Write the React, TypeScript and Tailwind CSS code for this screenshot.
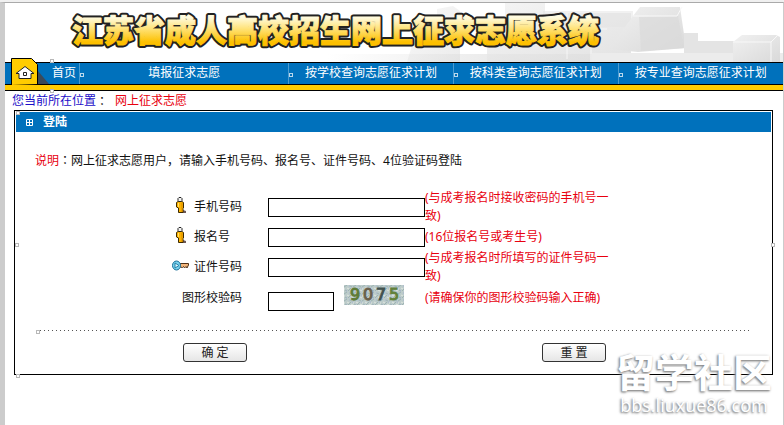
import React from 'react';
import clsx from 'clsx';

const navItems = ['填报征求志愿', '按学校查询志愿征求计划', '按科类查询志愿征求计划', '按专业查询志愿征求计划'];

const Handle = ({ className }: { className: string }) => (
  <span className={clsx('absolute h-1 w-1 border border-[#b8b8b8] bg-white', className)} />
);

const Banner = () => (
  <header className="relative h-[59px] overflow-hidden">
    <svg className="absolute top-0 right-0" width="456" height="59" aria-hidden="true">
      <defs>
        <linearGradient id="cube" x1="0" y1="0" x2="1" y2="1">
          <stop offset="0" stopColor="#f1f1f1" />
          <stop offset="1" stopColor="#d9d9d9" />
        </linearGradient>
        <linearGradient id="wash" x1="0" y1="0" x2="1" y2="0">
          <stop offset="0" stopColor="#fff" />
          <stop offset="0.4" stopColor="#e9e9e9" />
          <stop offset="1" stopColor="#ececec" />
        </linearGradient>
      </defs>
      <path d="M0 51h456v8H0z" fill="url(#wash)" />
      <path d="M110 6l16-3 7 5v51h-53l6-20 24-10z" fill="url(#cube)" opacity="0.5" />
      <path d="M178 0h40v10h86v49H160V30l18-8z" fill="url(#cube)" opacity="0.75" />
      <path d="M216 8h90v16h-72l-18 20z" fill="#e3e3e3" opacity="0.5" />
      <path d="M230 26h50M240 10v46M264 8v51" stroke="#fff" opacity="0.7" />
      <path d="M306 13l7-9h40l6 41-48 4-29-3 24-33z" fill="url(#cube)" />
      <path d="M312 14l39-1 6 32-43 3z" fill="#dadada" opacity="0.7" />
      <path d="M306 13h44l5-9" stroke="#f8f8f8" fill="none" />
      <path d="M357 30h14v8h42v16h-56z" fill="#e4e4e4" />
      <path d="M265 50h191v9H265z" fill="#ececec" />
      <path d="M406 39l9-7h34l4 2v25h-47z" fill="url(#cube)" />
      <path d="M406 39h38l6-6M444 39v20" stroke="#f8f8f8" fill="none" />
    </svg>
    <h1 className="relative">
      <svg className="block h-[59px] w-full" role="img" aria-label="江苏省成人高校招生网上征求志愿系统">
        <defs>
          <linearGradient id="gold" x1="0" y1="0" x2="0" y2="1">
            <stop offset="0.25" stopColor="#fffbe0" />
            <stop offset="0.5" stopColor="#ffe37a" />
            <stop offset="0.8" stopColor="#fdc000" />
          </linearGradient>
        </defs>
        <g className="font-['Noto_Sans_CJK_SC',sans-serif] text-[31px] font-black" strokeLinejoin="round">
          <text x="67" y="39" fill="#222" stroke="#222" strokeWidth="5">江苏省成人高校招生网上征求志愿系统</text>
          <text x="67" y="39" fill="url(#gold)" stroke="url(#gold)" strokeWidth="1" aria-hidden="true">江苏省成人高校招生网上征求志愿系统</text>
        </g>
      </svg>
    </h1>
  </header>
);

const NavBar = () => (
  <nav className="relative">
    <div className="grid h-[23px] grid-cols-[74px_209fr_164fr_165fr_165fr] border-y border-black bg-[#0071bc] text-center leading-5 text-white">
      <a href="#" className="pl-[47px] text-left whitespace-nowrap">首页</a>
      {navItems.map((item) => (
        <a key={item} href="#" className="relative border-l border-[#4b9bd0] whitespace-nowrap">
          <span className="absolute top-[10px] left-0 h-1 w-1 border border-[#b9d8ec]" />
          {item}
        </a>
      ))}
    </div>
    <div className="h-[6px] border-b border-black bg-[#fc0]" />
    <svg className="absolute -top-1 left-[6px]" width="42" height="28" aria-hidden="true">
      <path d="M27 13l11 13H27z" fill="#3b4a59" />
      <path d="M.5 27V.5h20l6 6V26" fill="#fc0" stroke="#000" />
      <path d="M0 27h27v1H0z" fill="#fc0" />
      <path d="M5 15.500l9-7 9 7h-3v5H8v-5z" fill="#fff" stroke="#222" />
      <path d="M12.500 14.500h3v3h-3z" fill="#fff" stroke="#222" />
    </svg>
    <Handle className="-top-[3px] left-[45px]" />
    <Handle className="top-[27px] left-[45px]" />
  </nav>
);

const PersonIcon = () => (
  <svg width="12" height="17" viewBox="0 0 12 17" aria-hidden="true">
    <path d="M8 13l3 1v2H8z" fill="#6d5a58" />
    <path d="M1.500 5.500L3 4.500h4l1.500 1V11l-.5.500v4H3.500V11l-2-1z" fill="#fdb400" stroke="#3d2a00" />
    <path d="M3.500 6v4" stroke="#ffe070" />
    <path d="M7 6v9" stroke="#d98a00" />
    <path d="M3 1.500L4 .500h2l1 1v2l-1 1H4l-1-1z" fill="#f4f4f4" stroke="#222" />
  </svg>
);

const KeyIcon = () => (
  <svg width="18" height="11" viewBox="0 0 18 11" aria-hidden="true">
    <path d="M8 3.500h8.500v1.500L15 8l-1-1.500L12.500 8l-1-1.500-1 1L8 7z" fill="#f2b67c" stroke="#503018" />
    <ellipse cx="4.500" cy="5.500" rx="4" ry="4.500" fill="#79d3ef" stroke="#1d7199" />
    <path d="M3 3l4 2.500L3 8z" fill="#e9fbff" stroke="#237fa6" />
  </svg>
);

const Captcha = () => (
  <svg className="ml-[10px] self-start" width="60" height="20" role="img" aria-label="9075">
    <defs>
      <pattern id="noise" width="9" height="7" patternUnits="userSpaceOnUse">
        <path d="M0 0h9v7H0z" fill="#bccbca" />
        <path d="M0 2l3-2M4 6l3-3M1 5l2 1M6 1l2 1" stroke="#9db3b3" />
        <path d="M3 3l2 1M7 5l2 1M0 4h1" stroke="#dfe6df" />
        <path d="M5 1h1M2 6h1M8 3h1" stroke="#a6b3d0" />
      </pattern>
    </defs>
    <rect width="60" height="20" fill="url(#noise)" />
    <g className="font-['DejaVu_Sans',sans-serif] text-[16px]" strokeWidth="1">
      <text x="6" y="15" fill="#5f7b37" stroke="#5f7b37">9</text>
      <text x="19" y="15" fill="#6a604b" stroke="#6a604b">0</text>
      <text x="32" y="15" fill="#42524e" stroke="#42524e">7</text>
      <text x="45" y="15" fill="#62813c" stroke="#62813c">5</text>
    </g>
  </svg>
);

interface FieldProps {
  id: string;
  label: string;
  hint: string;
  icon?: React.ReactNode;
  className: string;
}

const Field = ({ id, label, hint, icon, className }: FieldProps) => (
  <div className={clsx('flex items-center', className)}>
    <span className="mr-1 flex w-[18px] shrink-0 justify-center pb-1">{icon}</span>
    <label htmlFor={id} className="w-[74px] shrink-0">{label}</label>
    <input id={id} type="text" className="h-[19px] w-[157px] shrink-0 border border-black bg-white px-1 outline-none" />
    <span className="w-[190px] text-[#e8000f]">{hint}</span>
  </div>
);

const Colon = () => <span className="font-['Noto_Sans_CJK_TC',sans-serif] leading-none text-[#111]">：</span>;

const buttonClass =
  'h-[19px] w-16 rounded-[3px] border border-[#333] bg-linear-to-b from-white to-[#e6e6e6] leading-4 text-[#222]';

const LoginPanel = () => (
  <section className="relative mr-[10px] ml-[9px] border border-black">
    <h2 className="m-px flex h-5 items-center bg-[#0071bc] pl-[10px] font-bold text-white">
      <svg className="mr-[10px]" width="7" height="7" aria-hidden="true">
        <path d="M.5.5h6v6h-6zM3.500 0v7M0 3.500h7" fill="none" stroke="#fff" />
      </svg>
      登陆
    </h2>
    <p className="mt-5 pl-5">
      <span className="text-[#e8000f]">说明</span>
      <Colon />
      网上征求志愿用户，请输入手机号码、报名号、证件号码、4位验证码登陆
    </p>
    <form className="pt-[19px]">
      <div className="pl-[157px]">
        <Field id="phone" label="手机号码" icon={<PersonIcon />} hint="(与成考报名时接收密码的手机号一致)" className="h-9" />
        <Field id="regno" label="报名号" icon={<PersonIcon />} hint="(16位报名号或考生号)" className="h-6" />
        <Field id="idcard" label="证件号码" icon={<KeyIcon />} hint="(与成考报名时所填写的证件号码一致)" className="h-9" />
        <div className="flex h-[26px] items-center">
          <label htmlFor="captcha" className="w-[86px] shrink-0 pl-[10px] whitespace-nowrap">图形校验码</label>
          <span className="w-[10px] shrink-0" />
          <input id="captcha" type="text" className="h-[19px] w-[66px] shrink-0 self-end border border-black bg-white px-1 outline-none" />
          <Captcha />
          <span className="ml-[21px] whitespace-nowrap text-[#e8000f]">(请确保你的图形校验码输入正确)</span>
        </div>
      </div>
      <div className="relative mt-[19px] mr-5 ml-[25px]">
        <svg className="block h-px w-full" aria-hidden="true">
          <line x1="0" y1="0.5" x2="100%" y2="0.5" stroke="#555" strokeDasharray="1 3" />
        </svg>
        <Handle className="top-0 -left-1" />
      </div>
      <div className="flex gap-[295px] pt-3 pb-3 pl-[168px]">
        <button type="submit" className={buttonClass}>确 定</button>
        <button type="reset" className={buttonClass}>重 置</button>
      </div>
    </form>
    <Handle className="top-0 left-px" />
    <Handle className="top-1/2 left-0" />
    <Handle className="top-1/2 -right-[3px]" />
    <Handle className="-bottom-1 left-px" />
  </section>
);

const Watermark = () => (
  <div className="pointer-events-none absolute right-3 bottom-[10px] text-center text-white [text-shadow:-1px_1px_2px_#888,-1px_1px_3px_#aaa]">
    <div className="font-['Liberation_Sans','Noto_Sans_CJK_SC',sans-serif] text-[39px] leading-[42px] font-bold">留学社区</div>
    <div className="font-['Open_Sans',sans-serif] text-[18px] leading-5">bbs.liuxue86.com</div>
  </div>
);

export default function App() {
  return (
    <div className="relative flex min-h-screen flex-col border-t-2 border-[#f0f0f0] bg-white font-['Noto_Sans','Noto_Sans_CJK_SC',sans-serif] text-[12px] leading-[18px] text-[#111]">
      <div className="flex-1 border-t border-r border-l-[5px] border-t-[#aaa] border-r-[#ccc] border-l-[#ccc]">
        <Banner />
        <NavBar />
        <div className="flex h-[19px] items-center pl-[7px]">
          <span className="text-[#1a0dc8]">您当前所在位置</span>
          <Colon />
          <span className="pl-[7px] text-[#e8000f]">网上征求志愿</span>
        </div>
        <LoginPanel />
      </div>
      <Watermark />
    </div>
  );
}
